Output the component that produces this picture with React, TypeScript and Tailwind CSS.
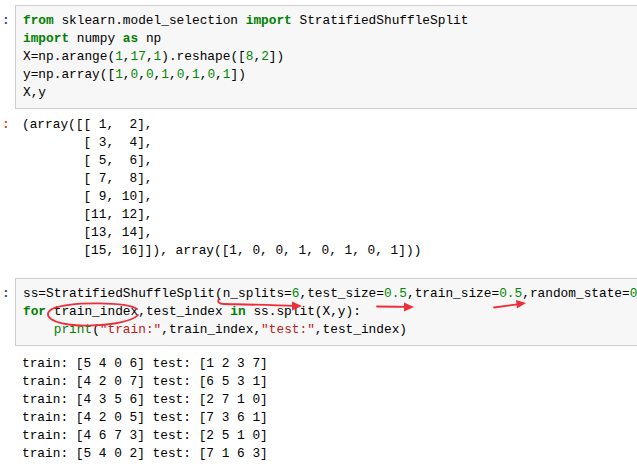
import React from "react";

const K = ({ children }: { children: React.ReactNode }) => (
  <span className="font-bold text-[#008000]">{children}</span>
);
const N = ({ children }: { children: React.ReactNode }) => (
  <span className="text-[#008800]">{children}</span>
);
const S = ({ children }: { children: React.ReactNode }) => (
  <span className="text-[#BA2121]">{children}</span>
);
const B = ({ children }: { children: React.ReactNode }) => (
  <span className="text-[#008000]">{children}</span>
);

function InPrompt() {
  return (
    <div className="w-[15px] shrink-0 pl-[2px] pt-[7px] font-bold text-[#303F9F]">:</div>
  );
}

function OutPrompt() {
  return <div className="w-[15px] shrink-0 pl-[2px] font-bold text-[#D84315]">:</div>;
}

function CodeBox({ children }: { children: React.ReactNode }) {
  return (
    <div className="w-[700px] shrink-0 border border-[#cfcfcf] bg-[#f7f7f7] py-[6px] pl-[7px] whitespace-pre text-black">
      {children}
    </div>
  );
}

export default function App() {
  const outputs = [
    ["5 4 0 6", "1 2 3 7"],
    ["4 2 0 7", "6 5 3 1"],
    ["4 3 5 6", "2 7 1 0"],
    ["4 2 0 5", "7 3 6 1"],
    ["4 6 7 3", "2 5 1 0"],
    ["5 4 0 2", "7 1 6 3"],
  ];
  return (
    <div
      className="relative h-[468px] w-[637px] overflow-hidden bg-white text-[12.8px] leading-[18px] text-black"
      style={{ fontFamily: '"Liberation Mono", "DejaVu Sans Mono", monospace' }}
    >
      <div className="flex flex-col pt-[5px]">
        {/* Cell 1 input */}
        <div className="flex">
          <InPrompt />
          <CodeBox>
            <div>
              <K>from</K> sklearn.model_selection <K>import</K> StratifiedShuffleSplit
            </div>
            <div>
              <K>import</K> numpy <K>as</K> np
            </div>
            <div>
              X=np.arange(<N>1</N>,<N>17</N>,<N>1</N>).reshape([<N>8</N>,<N>2</N>])
            </div>
            <div>
              y=np.array([<N>1</N>,<N>0</N>,<N>0</N>,<N>1</N>,<N>0</N>,<N>1</N>,<N>0</N>,<N>1</N>])
            </div>
            <div>X,y</div>
          </CodeBox>
        </div>

        {/* Cell 1 output */}
        <div className="mt-[7px] flex">
          <OutPrompt />
          <div className="whitespace-pre pl-[7px]">
            <div>(array([[ 1,  2],</div>
            <div>        [ 3,  4],</div>
            <div>        [ 5,  6],</div>
            <div>        [ 7,  8],</div>
            <div>        [ 9, 10],</div>
            <div>        [11, 12],</div>
            <div>        [13, 14],</div>
            <div>        [15, 16]]), array([1, 0, 0, 1, 0, 1, 0, 1]))</div>
          </div>
        </div>

        {/* Cell 2 input */}
        <div className="mt-[18px] flex">
          <InPrompt />
          <CodeBox>
            <div>
              ss=StratifiedShuffleSplit(n_splits=<N>6</N>,test_size=<N>0.5</N>,train_size=<N>0.5</N>,random_state=<N>0</N>)
            </div>
            <div>
              <K>for</K> train_index,test_index <K>in</K> ss.split(X,y):
            </div>
            <div>
              {"    "}
              <B>print</B>(<S>"train:"</S>,train_index,<S>"test:"</S>,test_index)
            </div>
          </CodeBox>
        </div>

        {/* Cell 2 output */}
        <div className="mt-[9px] flex">
          <div className="w-[15px] shrink-0" />
          <div className="whitespace-pre pl-[7px]">
            {outputs.map(([a, b], i) => (
              <div key={i}>
                train: [{a}] test: [{b}]
              </div>
            ))}
          </div>
        </div>
      </div>

      {/* Hand-drawn red annotations */}
      <svg
        className="pointer-events-none absolute left-0 top-0"
        width={637}
        height={468}
        viewBox="0 0 637 468"
      >
        <g stroke="#ec2f3a" strokeWidth={1.8} fill="none" strokeLinecap="round">
          <path d="M137 309 C128 302, 70 301, 52 309 C42 315, 50 324, 80 325.5 C105 326.5, 132 322, 138 315" />
          <path d="M219 299 C217 302, 219 304, 224 304 C245 304.5, 270 305, 296 306" />
          <path d="M377 306.5 C390 306.5, 400 306.8, 408 307" />
          <path d="M494 307.5 C505 306, 512 305, 520 304" />
        </g>
        <g fill="#ec2f3a">
          <polygon points="292,301.5 302,306 292,310.5" />
          <polygon points="404,302.5 414,307 404,311.5" />
          <polygon points="516,300 526,303 517,308.5" />
        </g>
      </svg>
    </div>
  );
}
